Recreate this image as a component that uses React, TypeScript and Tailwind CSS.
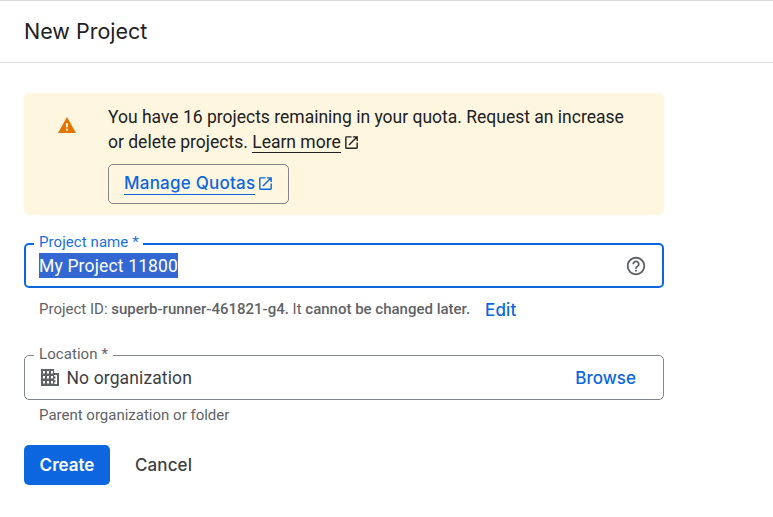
import type { ReactNode } from "react";
import { MdOpenInNew, MdHelpOutline } from "react-icons/md";

const display = "font-['Inter',sans-serif]";

function OrganizationIcon() {
  return (
    <svg viewBox="0 0 18 17" className="h-[17px] w-[18px] shrink-0">
      <path
        fill="#5f6368"
        fillRule="evenodd"
        d="M0 0h13v4h5v13H0zM2 2v2.4h2V2zM6 2v2.4h2V2zM10 2v2.4h2V2zM2 7v2.4h2V7zM6 7v2.4h2V7zM10 7v2.4h2V7zM2 12v2.4h2V12zM6 12v2.4h2V12zM10 12v2.4h2V12zM13.2 6v9H16V6z"
      />
      <path fill="#5f6368" d="M13 7.5h1.5v2H13zM13 11.3h1.5v2H13z" />
    </svg>
  );
}

function Field({
  label,
  focused = false,
  children,
}: {
  label: string;
  focused?: boolean;
  children: ReactNode;
}) {
  return (
    <fieldset
      className={
        focused
          ? "h-[53px] w-full rounded-[5px] border-2 border-[#0b66e0] pl-2"
          : "h-[54px] w-full rounded-[5px] border border-[#80868b] pl-[9px]"
      }
    >
      <legend
        className={`h-[18px] pl-[5px] text-[15px] tracking-[0.07px] whitespace-nowrap ${
          focused ? "pr-1 leading-[15px] text-[#1a6fdf]" : "pr-[5px] leading-[17px] text-[#5f6368]"
        }`}
      >
        {label}
      </legend>
      {children}
    </fieldset>
  );
}

export default function App() {
  return (
    <div className="h-[517px] w-[773px] overflow-hidden bg-white font-['Roboto',sans-serif] text-[#202124]">
      <header className="flex h-[63px] items-center border-y border-[#dadce0] pb-[2px] pl-6">
        <h1 className={`text-[21.5px] leading-[28px] font-normal ${display}`}>New Project</h1>
      </header>

      <main className="flex w-[664px] flex-col pt-[30px] pl-6">
        <section className="flex h-[122px] rounded-[5px] bg-[#fef6df]">
          <svg viewBox="0 0 18 16" className="mt-[24px] ml-[33.5px] h-4 w-[18px] shrink-0">
            <path fill="#e37400" d="M9 0 18 16H0z" />
            <path fill="#fef6df" d="M8 6.3h2v4H8zM8 11.7h2v2H8z" />
          </svg>
          <div className="ml-[32.5px] flex flex-col items-start pt-3">
            <p className="text-[17.5px] leading-[25px] whitespace-nowrap">
              You have 16 projects remaining in your quota. Request an increase
              <br />
              or delete projects.{" "}
              <a className="inline-block h-[23px] border-b border-[#202124]">Learn more</a>
              <MdOpenInNew className="ml-[2px] inline size-[17px] align-[-3px]" />
            </p>
            <button
              className={`mt-[9px] flex h-[40px] w-[181px] items-center rounded-[5px] border border-[#80868b] pl-[15px] text-[17px] font-medium text-[#0b66e0] ${display}`}
            >
              <span className="h-[22px] border-b border-[#0b66e0] leading-[20px] tracking-[0.23px] whitespace-nowrap">
                Manage Quotas
              </span>
              <MdOpenInNew className="mb-[2px] ml-[2px] size-[17px]" />
            </button>
          </div>
        </section>

        <div className="mt-5">
          <Field label="Project name *" focused>
            <div className="flex h-[25px] items-center justify-between pr-[15px] pl-[5px]">
              <span className="h-[25px] bg-[#3367d1] text-[17.5px] leading-[27px] tracking-[0.16px] whitespace-nowrap text-white">
                My Project 11800
              </span>
              <MdHelpOutline className="mt-px size-[22px] text-[#5f6368]" />
            </div>
          </Field>
        </div>
        <div className="mt-[9px] flex h-[25px] items-center pl-[15px] text-[15px] text-[#5f6368]">
          <span className="pb-px whitespace-nowrap">
            Project ID: <b className="font-medium">superb-runner-461821-g4.</b> It{" "}
            <b className="font-medium">cannot be changed later.</b>
          </span>
          <button
            className={`ml-[15px] pt-[3px] text-[17px] font-medium tracking-[0.1px] text-[#0b66e0] ${display}`}
          >
            Edit
          </button>
        </div>

        <div className="mt-[24px]">
          <Field label="Location *">
            <div className="flex h-[27px] items-center pr-[27px] pl-[7px]">
              <OrganizationIcon />
              <span className="ml-[7.5px] pt-px text-[17.5px] tracking-[0.12px] whitespace-nowrap text-[#3c4043]">
                No organization
              </span>
              <button
                className={`ml-auto pt-[2px] text-[17px] font-medium text-[#0b66e0] ${display}`}
              >
                Browse
              </button>
            </div>
          </Field>
        </div>
        <p className="mt-[5px] h-[20px] pl-[15px] text-[15px] leading-[20px] text-[#5f6368]">
          Parent organization or folder
        </p>

        <div className={`mt-5 flex h-10 items-center text-[17px] ${display}`}>
          <button className="h-10 w-[86px] rounded-[5px] bg-[#0b66e0] pt-[2px] font-semibold text-white">
            Create
          </button>
          <button className="ml-[25px] pt-[2px] font-medium tracking-[0.1px] text-[#3c4043]">
            Cancel
          </button>
        </div>
      </main>
    </div>
  );
}
